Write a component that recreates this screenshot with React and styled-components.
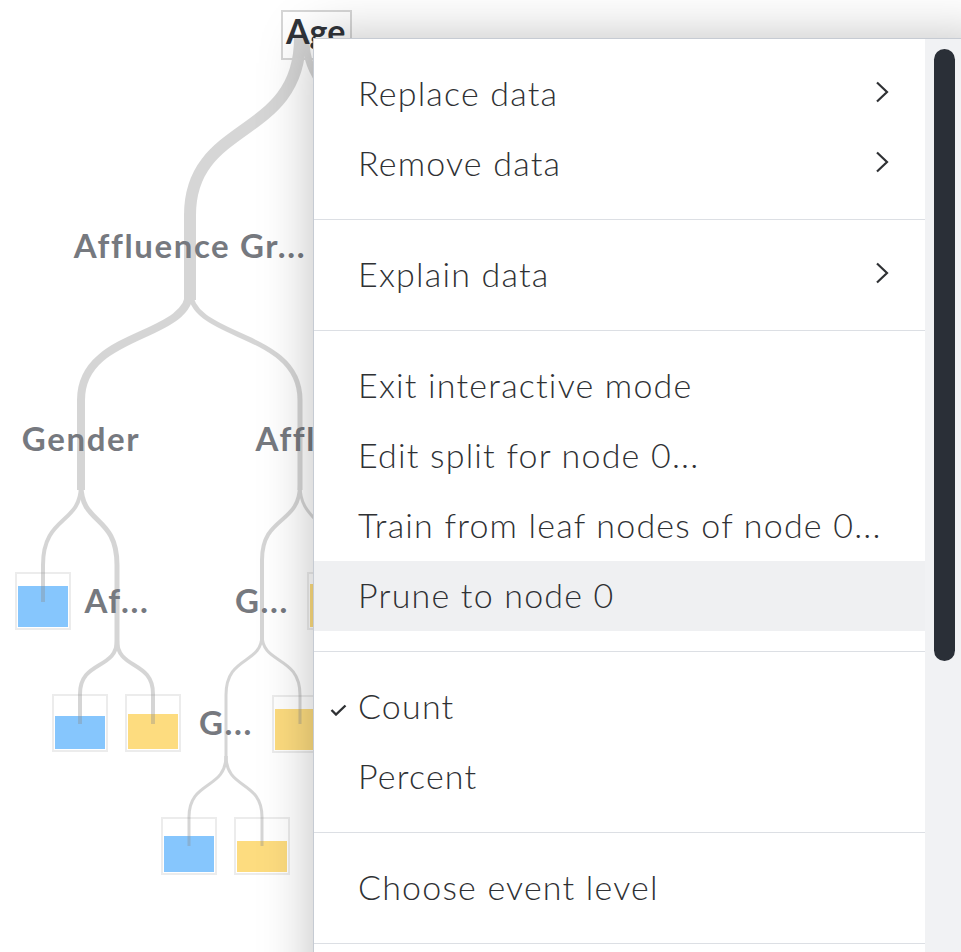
import React from "react";
import styled, { createGlobalStyle } from "styled-components";

const GlobalStyle = createGlobalStyle`
  html, body {
    margin: 0;
    padding: 0;
    background: #fff;
  }
  body {
    font-family: Lato, "Noto Sans", sans-serif;
  }
`;

const Page = styled.div`
  position: relative;
  width: 961px;
  height: 952px;
  overflow: hidden;
  background: #fff;
`;

// decision tree canvas: node places are the content, so they sit at coordinates
const TreeCanvas = styled.div`
  position: relative;
  width: 961px;
  height: 952px;
`;

const Links = styled.svg`
  position: absolute;
  left: 0;
  top: 0;
  pointer-events: none;
`;

const RootNode = styled.div`
  position: absolute;
  left: 281px;
  top: 10px;
  width: 71px;
  height: 50px;
  box-sizing: border-box;
  border: 2px solid #d6d6d6;
  padding: 2px 0 0 3px;
  font-size: 34px;
  font-weight: 700;
  line-height: 34px;
  color: #30343a;
`;

const NodeLabel = styled.span`
  position: absolute;
  left: ${(p) => p.$x}px;
  top: ${(p) => p.$y}px;
  transform: translate(-50%, -50%);
  white-space: nowrap;
  font-size: 33px;
  font-weight: 700;
  letter-spacing: 1.6px;
  color: #76797f;
`;

const Leaf = styled.div`
  position: absolute;
  left: ${(p) => p.$x - 28}px;
  top: ${(p) => p.$y}px;
  width: 56px;
  height: 58px;
  box-sizing: border-box;
  border: 2px solid #ececec;
  padding: 1px;
  display: flex;
  flex-direction: column;
  justify-content: flex-end;
`;

const LeafFill = styled.div`
  background: ${(p) => (p.$kind === "yes" ? "#fddc7f" : "#86c6fd")};
`;

const Menu = styled.div`
  position: absolute;
  left: 313px;
  top: 38px;
  width: 680px;
  height: 1000px;
  display: flex;
  background: #fff;
  border-left: 1px solid #c6cbd3;
  border-top: 1px solid #c6cbd3;
  box-shadow: 0 0 50px rgba(0, 0, 0, 0.25);
`;

const MenuList = styled.ul`
  flex: 0 0 611px;
  margin: 0;
  padding: 0;
  list-style: none;
`;

const Group = styled.li`
  padding: 20px 0;
  border-bottom: 1px solid #dcdfe4;
`;

const Item = styled.div`
  position: relative;
  height: 70px;
  box-sizing: border-box;
  display: flex;
  align-items: center;
  justify-content: space-between;
  padding: 0 35px 4px 44px;
  font-size: 34px;
  font-weight: 300;
  letter-spacing: 1.2px;
  color: #2f3134;
  background: ${(p) => (p.$active ? "#eff0f2" : "transparent")};
`;

const Check = styled.svg`
  position: absolute;
  left: 16px;
  top: 50%;
  margin-top: -3px;
`;

const ScrollTrack = styled.div`
  flex: 1;
  background: #f1f2f4;
  padding: 10px 0 0 9px;
`;

const ScrollThumb = styled.div`
  width: 21px;
  height: 612px;
  border-radius: 11px;
  background: #2a2f37;
`;

const links = [
  // root -> Affluence group
  { d: "M300 38 C300 140 190 120 190 215 L190 300", w: 12 },
  // root -> right subtree (under the menu)
  { d: "M306 40 C306 120 420 120 430 215", w: 7 },
  // Affluence group -> Gender
  { d: "M190 290 C190 340 81 330 81 400 L81 490", w: 8 },
  // Affluence group -> Affluence
  { d: "M190 290 C190 340 300 330 300 400 L300 490", w: 5 },
  // Gender -> leaf
  { d: "M81 485 C81 525 43 515 43 565 L43 602", w: 4 },
  // Gender -> Af...
  { d: "M81 485 C81 525 117 515 117 565 L117 648", w: 5 },
  { d: "M117 640 C117 670 80 660 80 694 L80 724", w: 4 },
  { d: "M117 640 C117 670 153 660 153 694 L153 724", w: 4 },
  // Affluence -> G...
  { d: "M300 485 C300 525 262 515 262 560 L262 640", w: 4 },
  { d: "M300 485 C300 525 335 515 335 570 L335 602", w: 3 },
  { d: "M262 635 C262 665 300 655 300 695 L300 724", w: 3 },
  { d: "M262 635 C262 665 226 655 226 695 L226 762", w: 3 },
  { d: "M226 756 C226 790 189 780 189 817 L189 846", w: 3 },
  { d: "M226 756 C226 790 262 780 262 817 L262 846", w: 3 },
];

const leaves = [
  { x: 43, y: 572, kind: "no", fill: 79 },
  { x: 335, y: 572, kind: "yes", fill: 82 },
  { x: 80, y: 694, kind: "no", fill: 63 },
  { x: 153, y: 694, kind: "yes", fill: 68 },
  { x: 300, y: 695, kind: "yes", fill: 79 },
  { x: 189, y: 817, kind: "no", fill: 70 },
  { x: 262, y: 817, kind: "yes", fill: 59 },
];

const labels = [
  { x: 190, y: 245, text: "Affluence Gr..." },
  { x: 81, y: 438, text: "Gender" },
  { x: 300, y: 438, text: "Affl..." },
  { x: 117, y: 600, text: "Af..." },
  { x: 262, y: 600, text: "G..." },
  { x: 226, y: 722, text: "G..." },
];

const Chevron = () => (
  <svg width="16" height="24" viewBox="0 0 16 24">
    <path d="M3 2.5 L13 12 L3 21.5" fill="none" stroke="#2f3134" strokeWidth="2.2" />
  </svg>
);

const menuGroups = [
  [
    { label: "Replace data", sub: true },
    { label: "Remove data", sub: true },
  ],
  [{ label: "Explain data", sub: true }],
  [
    { label: "Exit interactive mode" },
    { label: "Edit split for node 0..." },
    { label: "Train from leaf nodes of node 0..." },
    { label: "Prune to node 0", active: true },
  ],
  [{ label: "Count", checked: true }, { label: "Percent" }],
  [{ label: "Choose event level" }],
];

export default function App() {
  return (
    <Page>
      <GlobalStyle />
      <TreeCanvas>
        {leaves.map((l, i) => (
          <Leaf key={i} $x={l.x} $y={l.y}>
            <LeafFill $kind={l.kind} style={{ height: `${l.fill}%` }} />
          </Leaf>
        ))}
        <Links width="961" height="952">
          <g opacity="0.36" fill="none" stroke="#8e8e8e" strokeLinecap="butt">
            {links.map((l, i) => (
              <path key={i} d={l.d} strokeWidth={l.w} />
            ))}
          </g>
        </Links>
        {labels.map((l, i) => (
          <NodeLabel key={i} $x={l.x} $y={l.y}>
            {l.text}
          </NodeLabel>
        ))}
        <RootNode>Age</RootNode>
      </TreeCanvas>

      <Menu>
        <MenuList>
          {menuGroups.map((group, gi) => (
            <Group key={gi}>
              {group.map((item) => (
                <Item key={item.label} $active={item.active}>
                  {item.checked && (
                    <Check width="17" height="12" viewBox="0 0 17 12">
                      <path d="M1.5 6 L6 10.5 L15.5 1.5" fill="none" stroke="#2f3134" strokeWidth="2.4" />
                    </Check>
                  )}
                  <span>{item.label}</span>
                  {item.sub && <Chevron />}
                </Item>
              ))}
            </Group>
          ))}
        </MenuList>
        <ScrollTrack>
          <ScrollThumb />
        </ScrollTrack>
      </Menu>
    </Page>
  );
}
